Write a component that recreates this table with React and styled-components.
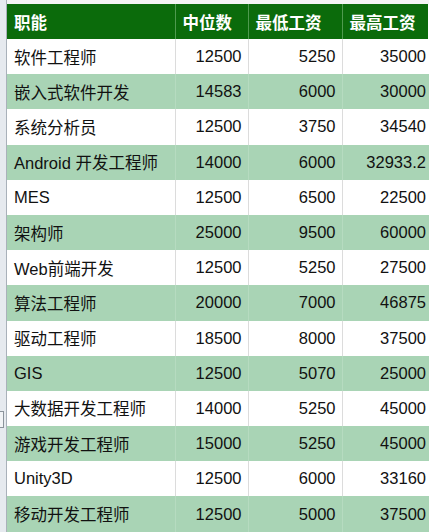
import React from "react";
import styled, { createGlobalStyle } from "styled-components";

const rows = [
  ["软件工程师", 12500, 5250, 35000],
  ["嵌入式软件开发", 14583, 6000, 30000],
  ["系统分析员", 12500, 3750, 34540],
  ["Android 开发工程师", 14000, 6000, 32933.2],
  ["MES", 12500, 6500, 22500],
  ["架构师", 25000, 9500, 60000],
  ["Web前端开发", 12500, 5250, 27500],
  ["算法工程师", 20000, 7000, 46875],
  ["驱动工程师", 18500, 8000, 37500],
  ["GIS", 12500, 5070, 25000],
  ["大数据开发工程师", 14000, 5250, 45000],
  ["游戏开发工程师", 15000, 5250, 45000],
  ["Unity3D", 12500, 6000, 33160],
  ["移动开发工程师", 12500, 5000, 37500],
];

const GlobalStyle = createGlobalStyle`
  html, body {
    margin: 0;
    padding: 0;
    background: #ffffff;
    overflow: hidden;
  }
  body {
    font-family: "Liberation Sans", Arial, "Noto Sans CJK SC", sans-serif;
  }
`;

const Page = styled.div`
  display: flex;
  width: 429px;
  height: 532px;
  overflow: hidden;
  background: #f4f4f4;
`;

const Gutter = styled.div`
  width: 6px;
  flex-shrink: 0;
  background: #e6eaef;
  border-right: 1px solid #a9b1ba;
  display: flex;
  flex-direction: column;
`;

const Handle = styled.div`
  margin-top: 411px;
  width: 3px;
  height: 15px;
  border: 1px solid #8c949c;
  border-left: none;
  background: #f2f4f6;
`;

const Sheet = styled.div`
  padding-top: 4px;
  flex-shrink: 0;
`;

const Table = styled.table`
  border-collapse: collapse;
  table-layout: fixed;
  width: 422px;
  font-size: 16.5px;
  color: #111111;
`;

const HeadCell = styled.th`
  height: 35px;
  padding: 0 7px;
  background: #0b6b0b;
  color: #ffffff;
  font-weight: bold;
  text-align: left;
  border-right: 1px solid #4f9a4f;
  white-space: nowrap;
  &:last-child {
    border-right: 2px solid #ffffff;
  }
`;

const Row = styled.tr`
  background: ${(p) => (p.$alt ? "#a9d4b5" : "#ffffff")};
`;

const Cell = styled.td`
  height: 35.2px;
  padding: ${(p) => (p.$num ? "0 6px 0 7px" : "0 7px")};
  text-align: ${(p) => (p.$num ? "right" : "left")};
  border-right: 1px solid ${(p) => (p.$alt ? "#b6dbc0" : "#dcdcdc")};
  white-space: nowrap;
  overflow: hidden;
  &:last-child {
    border-right: none;
    padding-right: 3px;
  }
`;

const App = () => (
  <Page>
    <GlobalStyle />
    <Gutter>
      <Handle />
    </Gutter>
    <Sheet>
      <Table>
        <colgroup>
          <col style={{ width: 168 }} />
          <col style={{ width: 73 }} />
          <col style={{ width: 94 }} />
          <col style={{ width: 87 }} />
        </colgroup>
        <thead>
          <tr>
            <HeadCell>职能</HeadCell>
            <HeadCell>中位数</HeadCell>
            <HeadCell>最低工资</HeadCell>
            <HeadCell>最高工资</HeadCell>
          </tr>
        </thead>
        <tbody>
          {rows.map((r, i) => (
            <Row key={r[0]} $alt={i % 2 === 1}>
              <Cell $alt={i % 2 === 1}>{r[0]}</Cell>
              <Cell $alt={i % 2 === 1} $num>{r[1]}</Cell>
              <Cell $alt={i % 2 === 1} $num>{r[2]}</Cell>
              <Cell $alt={i % 2 === 1} $num>{r[3]}</Cell>
            </Row>
          ))}
        </tbody>
      </Table>
    </Sheet>
  </Page>
);

export default App;
